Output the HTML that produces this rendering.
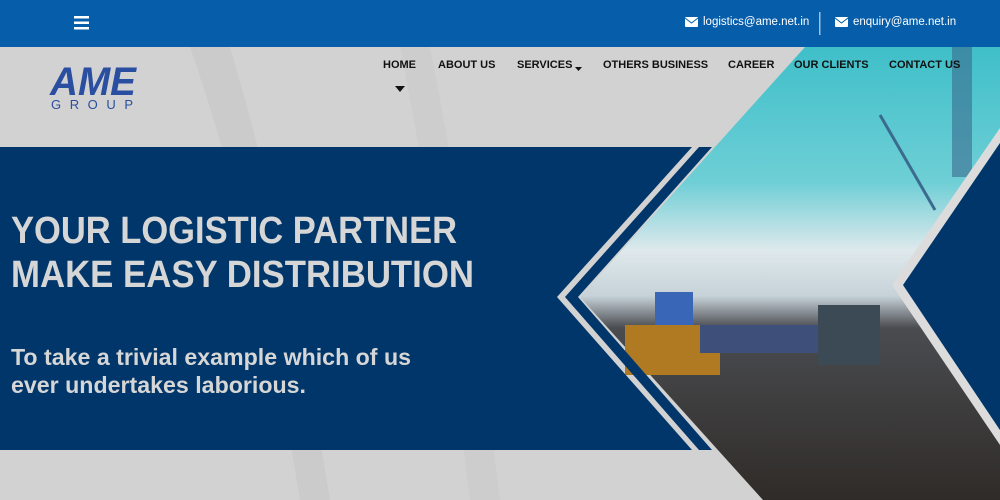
<!DOCTYPE html>
<html><head><meta charset="utf-8"><style>
*{margin:0;padding:0;box-sizing:border-box}
body{width:1000px;height:500px;overflow:hidden;position:relative;background:#d2d2d2;font-family:"Liberation Sans",sans-serif}
.nav{position:absolute;top:59px;font-weight:bold;font-size:11px;color:#111;white-space:nowrap}
.mail{position:absolute;top:16px;color:#fff;font-size:11.5px;white-space:nowrap}
</style></head><body>
<svg style="position:absolute;left:0;top:0" width="1000" height="500">
<defs>
<linearGradient id="sky" x1="0" y1="0" x2="0" y2="1">
<stop offset="0" stop-color="#3fbfc9"/><stop offset="0.3" stop-color="#6fcfd6"/><stop offset="0.45" stop-color="#dfe9ec"/><stop offset="0.55" stop-color="#c6d2d8"/><stop offset="0.62" stop-color="#4a4c50"/><stop offset="1" stop-color="#2f2b28"/>
</linearGradient>
</defs>
<rect x="0" y="0" width="1000" height="47" fill="#065da9"/>
<path d="M190 47 Q260 250 300 500 L330 500 Q290 250 230 47Z" fill="#cbcbcb"/>
<path d="M400 47 Q440 250 470 500 L500 500 Q470 250 430 47Z" fill="#cdcdcd"/>
<polygon points="805,47 1000,47 1000,500 763,500 580,297" fill="url(#sky)"/>
<rect x="952" y="47" width="20" height="130" fill="#3b6b8e" opacity="0.6"/>
<path d="M880 115 L935 210" stroke="#3b6b8e" stroke-width="3"/>
<rect x="818" y="305" width="62" height="60" fill="#3c4a55"/>
<rect x="655" y="292" width="38" height="45" fill="#3a66b8"/>
<rect x="625" y="325" width="95" height="50" fill="#b07a22"/>
<rect x="700" y="325" width="118" height="28" fill="#3e4f7a"/>
<polygon points="0,147 692,147 557,297 692,450 0,450" fill="#00366a"/>
<polygon points="699,147 712,147 578,297 712,450 699,450 565,297" fill="#00366a"/>
<polygon points="1000,128 892,285 1000,445 1000,430 903,285 1000,143" fill="#dcdcdc"/>
<polygon points="1000,143 903,285 1000,430" fill="#00366a"/>
<g fill="#d6d6d6" font-family="Liberation Sans,sans-serif" font-weight="bold">
<text x="11" y="243" font-size="38" textLength="446" lengthAdjust="spacingAndGlyphs">YOUR LOGISTIC PARTNER</text>
<text x="11" y="287" font-size="38" textLength="463" lengthAdjust="spacingAndGlyphs">MAKE EASY DISTRIBUTION</text>
<text x="11" y="365" font-size="23" textLength="400" lengthAdjust="spacingAndGlyphs">To take a trivial example which of us</text>
<text x="11" y="393" font-size="23" textLength="295" lengthAdjust="spacingAndGlyphs">ever undertakes laborious.</text>
</g>
<g fill="#2a4fa0">
<text x="50" y="95" font-size="40" font-weight="bold" font-style="italic" font-family="Liberation Sans,sans-serif" textLength="86" lengthAdjust="spacingAndGlyphs">AME</text>
<text x="51" y="109" font-size="13" font-family="Liberation Sans,sans-serif" textLength="82" lengthAdjust="spacing">GROUP</text>
</g>
<rect x="74" y="16" width="15" height="2.5" fill="#fff"/><rect x="74" y="21.5" width="15" height="2.5" fill="#fff"/><rect x="74" y="27" width="15" height="2.5" fill="#fff"/>
<g fill="#fff"><rect x="685" y="17" width="13" height="10" rx="1"/><rect x="835" y="17" width="13" height="10" rx="1"/></g>
<g stroke="#065da9" stroke-width="1" fill="none"><path d="M685 18 L691.5 23 L698 18"/><path d="M835 18 L841.5 23 L848 18"/></g>
<rect x="819" y="12" width="1.5" height="23" fill="#9fc0e0"/>
<polygon points="395,86 405,86 400,92" fill="#111"/>
<polygon points="575,67 582,67 578.5,71" fill="#111"/>
</svg>
<div class="mail" style="left:703px">logistics@ame.net.in</div>
<div class="mail" style="left:853px">enquiry@ame.net.in</div>
<div class="nav" style="left:383px">HOME</div>
<div class="nav" style="left:438px">ABOUT US</div>
<div class="nav" style="left:517px">SERVICES</div>
<div class="nav" style="left:603px">OTHERS BUSINESS</div>
<div class="nav" style="left:728px">CAREER</div>
<div class="nav" style="left:794px">OUR CLIENTS</div>
<div class="nav" style="left:889px">CONTACT US</div>
</body></html>
